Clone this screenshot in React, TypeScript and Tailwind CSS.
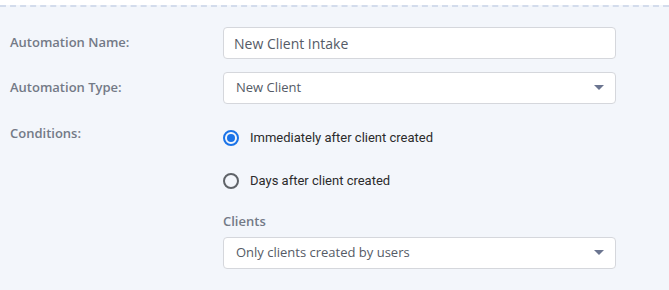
export default function App() {
    return (
        <div className="w-[669px] h-[290px] bg-[#f3f6fb] overflow-hidden" style={{ fontFamily: '"Open Sans", sans-serif' }}>
            <div className="h-[5px] bg-white" />
            <div className="border-t-2 border-dashed border-[#d3dcec]" />
            <div className="pl-[10px] pt-[20px]">
                <div className="flex items-center h-[32px]">
                    <div className="w-[213px] text-[13px] font-semibold text-[#737a87]">Automation Name:</div>
                    <div className="w-[393px] h-[32px] bg-white border border-[#d5d7dc] rounded-[4px] flex items-center px-[10px] text-[14px] text-[#555b66]">
                        New Client Intake
                    </div>
                </div>
                <div className="flex items-center h-[32px] mt-[13px]">
                    <div className="w-[213px] text-[13px] font-semibold text-[#737a87]">Automation Type:</div>
                    <div className="w-[393px] h-[32px] bg-white border border-[#d5d7dc] rounded-[4px] flex items-center justify-between pl-[12px] pr-[10px] text-[13px] text-[#555b66]">
                        <span>New Client</span>
                        <Caret />
                    </div>
                </div>
                <div className="flex mt-[20px]">
                    <div className="w-[213px] text-[13px] font-semibold text-[#737a87] leading-[18px]">Conditions:</div>
                    <div className="w-[393px]" style={{ fontFamily: 'Roboto, sans-serif' }}>
                        <div className="flex items-center h-[20px] mt-[4px]">
                            <div className="w-[16px] h-[16px] rounded-full border-2 border-[#1a73e8] flex items-center justify-center">
                                <div className="w-[8px] h-[8px] rounded-full bg-[#1a73e8]" />
                            </div>
                            <span className="ml-[11px] text-[13px] text-[#2b2b2b]">Immediately after client created</span>
                        </div>
                        <div className="flex items-center h-[20px] mt-[23px]">
                            <div className="w-[16px] h-[16px] rounded-full border-2 border-[#5f6368]" />
                            <span className="ml-[11px] text-[13px] text-[#2b2b2b]">Days after client created</span>
                        </div>
                        <div className="mt-[21px] text-[13px] font-semibold text-[#737a87]" style={{ fontFamily: '"Open Sans", sans-serif' }}>Clients</div>
                        <div className="mt-[5px] w-[393px] h-[32px] bg-white border border-[#d5d7dc] rounded-[4px] flex items-center justify-between pl-[12px] pr-[10px] text-[13px] text-[#555b66]" style={{ fontFamily: '"Open Sans", sans-serif' }}>
                            <span>Only clients created by users</span>
                            <Caret />
                        </div>
                    </div>
                </div>
            </div>
        </div>
    );
}

function Caret() {
    return (
        <svg width="10" height="6" viewBox="0 0 10 6" className="mr-[1px]">
            <path d="M0 0 L10 0 L5 5 Z" fill="#6b7590" />
        </svg>
    );
}
